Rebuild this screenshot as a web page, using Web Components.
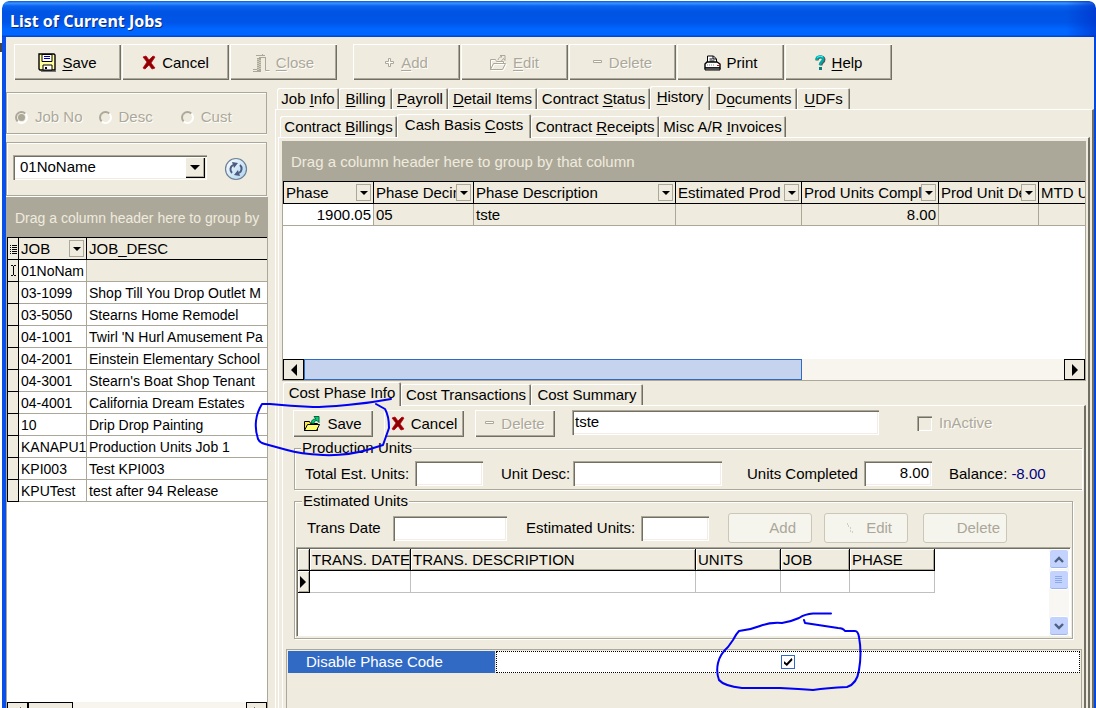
<!DOCTYPE html>
<html lang="en">
<head>
<meta charset="utf-8">
<title>List of Current Jobs</title>
<style>
html, body { height: 100%; margin: 0; overflow: hidden; background: #fff; }
body {
  --face: #efebde; --shade: #aca899; --dark: #716f64; --accent: #316ac5;
  font: 15px/18px "Liberation Sans", Arial, sans-serif; color: #000; position: relative;
}
</style>
</head>
<body>
<jobs-app></jobs-app>
<script>
const base = `
  *, *::before, *::after { box-sizing: border-box; }
  button, input, select { font: inherit; color: inherit; margin: 0; border-radius: 0; }
  u { text-underline-offset: 2px; }
`;

function define(name, html, setup) {
  const template = document.createElement('template');
  template.innerHTML = html;
  customElements.define(name, class extends HTMLElement {
    constructor() {
      super();
      this.attachShadow({ mode: 'open' }).append(template.content.cloneNode(true));
    }
    connectedCallback() { if (setup) setup(this, this.shadowRoot); }
  });
}

/* ---------- icons ---------- */
const icons = {
  floppy: [18, 19, `<path d="M1 1h15l1 1v15H2l-1-1z" fill="#ffff9c" stroke="#000" stroke-width="1.4"/><path d="M4 1.5h10v7H4z" fill="#fff" stroke="#000"/><path d="M6 3.5h6M6 5.5h6" stroke="#00a"/><path d="M5 12h9v5H5z" fill="#fff" stroke="#000"/><path d="M7 14h2v2H7z" fill="#000"/><path d="M3 18.5h15" stroke="#777"/>`],
  cross: [14, 15, `<path d="M1 2 4 1l3 4 4-4 2 1-4 6 4 5-3 1-3-4-4 4-2-1 4-6z" fill="#8b0000" stroke="#c00010" stroke-width=".8"/>`],
  door: [17, 18, `<g fill="none" stroke="#aca899"><path d="M3 1.500h9M9.500 0v2M6 3.500h6M12.500 3v13.500h4M0 15.500h5M0 17.500h8"/><path d="M6 4v13" stroke-width="4"/><path d="M5 5v11M7 6v10" stroke="#efebde" stroke-dasharray="1 1"/></g><path d="M17 17.500h-4" stroke="#fff"/>`],
  plus: [10, 10, `<path d="M3.500 .5h2v3h3v2h-3v3h-2v-3h-3v-2h3z" fill="#fff" stroke="#aca899"/>`],
  minus: [10, 5, `<path d="M.5 .5h8v2h-8z" fill="#fff" stroke="#aca899"/>`],
  folderoff: [17, 16, `<g fill="none" stroke="#fff" transform="translate(1 1)"><path d="M.5 14.500v-10h5l1 2h7v2M.5 14.500l3-6h12l-3 6z"/></g><g fill="none" stroke="#aca899"><path d="M.5 14.500v-10h5l1 2h7v2M.5 14.500l3-6h12l-3 6zM8 5c1-3 2-3 4-3l-2-1.500h5v5l-1.500-2-2.500 3"/></g>`],
  folder: [17, 16, `<path d="M.5 14.500v-9h5l1 2h7v7z" fill="#ffe94a" stroke="#000"/><path d="M.5 14.500l3-6h12l-3 6z" fill="#ffff70" stroke="#000"/><path d="M7 7c1-4 3-4 5-4l-2-2.500h5v6l-2-2c-2 0-3 1-3 3z" fill="#00d070" stroke="#064"/>`],
  printer: [17, 16, `<path d="M3.500 7V1h6l3 3v4" fill="#fff" stroke="#000"/><path d="M9 1v3h3M5.500 4h3M5.500 6h5" fill="none" stroke="#000"/><path d="M1 9l2-2h10l3 2v4H1z" fill="#fff" stroke="#000" stroke-width="1.4"/><path d="M1 13h15v2H1z" fill="#999" stroke="#000"/><path d="M13 10h2v1h-2z" fill="#f00"/><path d="M3 10h8" stroke="#888" stroke-dasharray="1 1"/>`],
  help: [11, 16, `<path d="M2 5.500C2 1 9 1 9 4.500 9 7.500 6 7 6 10.500" fill="none" stroke="#555" stroke-width="3"/><path d="M1.500 5C1.500 .5 8 .5 8 4 8 7 5 6.500 5 10" fill="none" stroke="#00a8a8" stroke-width="2.600"/><path d="M4 12h3v3H4z" fill="#008080"/><path d="M2 2.500Q5 0 8 2" fill="none" stroke="#3ff"/>`],
  dots: [8, 12, `<path d="M1 2h1M2 4h1M4 6h1M4 9h1M6 10h1" stroke="#aca899"/>`],
};
customElements.define('app-icon', class extends HTMLElement {
  constructor() { super(); this.attachShadow({ mode: 'open' }); }
  connectedCallback() {
    const [w, h, art] = icons[this.getAttribute('name')];
    this.shadowRoot.innerHTML = `<style>:host{display:block;flex:none}svg{display:block}</style>
      <svg width="${w}" height="${h}" viewBox="0 0 ${w} ${h}" aria-hidden="true">${art}</svg>`;
  }
});

/* ---------- push button ---------- */
define('raised-button', `
<style>${base}
:host { display: block; width: 107px; height: 36px; flex: none; }
:host([small]) { width: 80px; height: 27px; }
button { width: 100%; height: 100%; padding: 1px 0 0; display: flex; align-items: center; justify-content: center; gap: 6px;
  background: var(--face); border: 0; box-shadow: inset 1px 1px #fff, inset -1px -1px var(--dark), inset -2px -2px var(--shade); white-space: nowrap; }
:host([small]) button { padding: 0; }
button:disabled { color: var(--shade); text-shadow: 1px 1px #fff; }
</style>
<button><slot name="icon"></slot><span><slot></slot></span></button>`,
(host, root) => { root.querySelector('button').disabled = host.hasAttribute('disabled'); });

define('flat-button', `
<style>${base}
:host { display: block; width: 84px; height: 30px; flex: none; }
button { width: 100%; height: 100%; padding: 0 15px; display: flex; align-items: center; justify-content: flex-end; gap: 12px;
  background: #f6f5ed; border: 1px solid #cac7ba; border-radius: 3px; }
:host([tight]) button { padding: 0 6px; }
button:disabled { color: #aaa79a; }
</style>
<button disabled><slot name="icon"></slot><span><slot></slot></span></button>`);

/* ---------- tabs ---------- */
define('tab-strip', `
<style>
:host { display: flex; align-items: flex-end; height: 24px; padding-left: 2px; }
:host([flush]) { padding-left: 1px; }
</style><slot></slot>`, host => host.setAttribute('role', 'tablist'));

define('tab-item', `
<style>${base}
:host { display: block; height: 21px; flex: none; }
:host([selected]) { height: 24px; margin-bottom: -1px; z-index: 1; position: relative; }
button { height: 100%; width: 100%; padding: 0 4px; background: var(--face); border: 0; border-radius: 2px 2px 0 0; white-space: nowrap;
  display: flex; justify-content: center; align-items: center;
  box-shadow: inset 1px 1px #fff, inset -1px 0 var(--dark), inset -2px 0 var(--shade); }
:host([selected]) button { padding-bottom: 3px; }
</style><button role="tab"><slot></slot></button>`,
(host, root) => {
  host.style.width = host.getAttribute('size') + 'px';
  root.querySelector('button').setAttribute('aria-selected', host.hasAttribute('selected'));
});

define('tab-pane', `
<style>
:host { display: flex; flex-direction: column; flex: 1; min-height: 0; box-sizing: border-box; background: var(--face);
  border: solid; border-width: 1px 2px 0 1px; border-color: #fff var(--dark) transparent #fff; padding: 3px 2px 0 2px; }
:host([inner]) { padding: 3px 2px 0 3px; }
:host([form]) { padding: 4px 2px 0 3px; }
</style><slot></slot>`);

/* ---------- grids ---------- */
const gridCss = `${base}
:host { display: flex; flex-direction: column; overflow: hidden; background: #fff; }
.group { flex: none; height: 40px; padding: 2px 0 0 9px; background: var(--shade); color: var(--face); display: flex; align-items: center; white-space: nowrap; overflow: hidden; }
table { border-collapse: separate; border-spacing: 0; table-layout: fixed; width: 100%; }
th, td { padding: 0 0 0 2px; text-align: left; font-weight: normal; white-space: nowrap; overflow: hidden; }
th { height: 23px; background: var(--face); border: solid #000; border-width: 1px 1px 1px 0; }
td { height: 22px; border: solid var(--shade); border-width: 0 1px 1px 0; }
.cap { display: flex; align-items: center; justify-content: space-between; overflow: hidden; }
.cap span { overflow: hidden; min-width: 0; }
.cap button { flex: none; width: 15px; height: 17px; margin-right: 2px; padding: 0; background: var(--face); border: 1px solid var(--shade); display: grid; place-items: center; }
.cap button::before { content: ""; border: 4px solid transparent; border-top-color: #000; border-bottom: 0; }
td.num { text-align: right; padding-right: 2px; }
.soft { background: var(--face); }
.fill { flex: 1; }
`;
const cap = (text, filter = true) => `<div class="cap"><span>${text}</span>${filter ? `<button aria-label="Filter ${text}"></button>` : ''}</div>`;

define('flat-scrollbar', `
<style>${base}
:host { display: flex; flex: none; height: 21px; background: #f7f5ee; }
button { width: 21px; padding: 0; flex: none; background: var(--face); border: 1px solid #000; display: grid; place-items: center; }
svg { display: block; }
.thumb { width: var(--thumb, 45px); border: 1px solid var(--thumb-edge, #000); background: var(--thumb-fill, var(--face)); }
.track { flex: 1; }
</style>
<button aria-label="Scroll left"><svg width="6" height="12"><path d="M6 0v12L0 6z"/></svg></button>
<div class="thumb"></div><div class="track"></div>
<button aria-label="Scroll right"><svg width="6" height="12"><path d="M0 0v12l6-6z"/></svg></button>`);

const jobs = [
  ['03-1099', 'Shop Till You Drop Outlet M'], ['03-5050', 'Stearns Home Remodel'],
  ['04-1001', "Twirl 'N Hurl Amusement Pa"], ['04-2001', 'Einstein Elementary School'],
  ['04-3001', "Stearn's Boat Shop Tenant"], ['04-4001', 'California Dream Estates'],
  ['10', 'Drip Drop Painting'], ['KANAPU1', 'Production Units Job 1'],
  ['KPI003', 'Test KPI003'], ['KPUTest', 'test after 94 Release'],
];
define('jobs-grid', `
<style>${gridCss}
:host { flex: 1; border-right: 1px solid var(--shade); }
.body { flex: 1; display: flex; flex-direction: column; border-left: 1px solid var(--shade); }
.group, td { font-size: 14px; }
.mark { padding: 0; background: var(--face); border: solid #000; border-width: 0 1px 1px 1px; text-align: center; }
th.mark { border-top-width: 1px; }
.mark svg { display: block; margin: auto; }
td:last-child, th:last-child { border-right: 0; }
</style>
<div class="group">Drag a column header here to group by</div>
<div class="body">
<table><colgroup><col style="width:12px"><col style="width:68px"><col></colgroup>
<thead><tr><th class="mark"><svg width="8" height="10" aria-hidden="true"><path d="M1 1.500h1M3 1.500h5M1 3.500h1M3 3.500h5M1 5.500h1M3 5.500h5M1 7.500h1M3 7.500h5M1 9.500h1M3 9.500h5" stroke="#000"/></svg></th><th>${cap('JOB')}</th><th>JOB_DESC</th></tr></thead>
<tbody><tr><td class="mark"><svg width="7" height="11" aria-hidden="true"><path d="M1 .5h2M4 .5h2M3.500 1v9M1 10.500h2M4 10.500h2" stroke="#000"/></svg></td><td>01NoNam</td><td class="soft"></td></tr>
${jobs.map(([id, name]) => `<tr><td class="mark"></td><td>${id}</td><td>${name}</td></tr>`).join('')}</tbody></table>
<div class="fill"></div>
<flat-scrollbar></flat-scrollbar>
</div>`);

define('phase-grid', `
<style>${gridCss}
:host { height: 240px; flex: none; border-bottom: 1px solid var(--shade); }
.body { flex: 1; display: flex; flex-direction: column; border: solid var(--shade); border-width: 0 1px; }
th:first-child { border-left-width: 1px; }
th:last-child, td:last-child { border-right: 0; }
flat-scrollbar { --thumb: 498px; --thumb-edge: var(--accent); --thumb-fill: #c6d3ef; }
</style>
<div class="group">Drag a column header here to group by that column</div>
<div class="body">
<table><colgroup><col style="width:91px"><col style="width:100px"><col style="width:202px"><col style="width:126px"><col style="width:137px"><col style="width:100px"><col></colgroup>
<thead><tr><th>${cap('Phase')}</th><th>${cap('Phase Decim')}</th><th>${cap('Phase Description')}</th><th>${cap('Estimated Prod')}</th><th>${cap('Prod Units Compl')}</th><th>${cap('Prod Unit De')}</th><th>MTD U</th></tr></thead>
<tbody><tr><td class="num">1900.05</td><td class="soft">05</td><td class="soft">tste</td><td class="soft"></td><td class="soft num">8.00</td><td class="soft"></td><td class="soft"></td></tr></tbody></table>
<div class="fill"></div>
<flat-scrollbar></flat-scrollbar>
</div>`);

define('trans-grid', `
<style>${gridCss}
:host { flex-direction: row; justify-content: space-between; height: 90px; border: 1px solid var(--shade); border-right-color: #fff; border-bottom-color: #f1efe2; box-shadow: inset 1px 1px var(--dark); padding: 1px 0 0 1px; }
table { width: 637px; align-self: flex-start; }
th { height: 22px; border-top: 0; box-shadow: inset 1px 1px #fff, inset -1px -1px var(--shade); }
td { border-color: #c0c0c0; }
td:first-child { background: var(--face); border-color: #000; box-shadow: inset 1px 1px #fff, inset -1px -1px var(--shade); }
svg { display: block; }
.bar { width: 20px; margin-right: 1px; display: flex; flex-direction: column; gap: 1px; background: #f8f7f3; }
.bar button { height: 20px; padding: 0; flex: none; display: grid; place-items: center; background: #c3d3fd; border: 1px solid #fff; border-radius: 3px; box-shadow: inset 0 -1px #9cb5ec; }
.bar div { flex: 1; }
</style>
<table><colgroup><col style="width:12px"><col style="width:101px"><col style="width:285px"><col style="width:85px"><col style="width:69px"><col style="width:85px"></colgroup>
<thead><tr><th></th><th>TRANS. DATE</th><th>TRANS. DESCRIPTION</th><th>UNITS</th><th>JOB</th><th>PHASE</th></tr></thead>
<tbody><tr><td><svg width="7" height="12" aria-hidden="true"><path d="M0 0v12l6-6z"/></svg></td><td></td><td></td><td></td><td></td><td></td></tr></tbody></table>
<div class="bar">
<button aria-label="Scroll up"><svg width="10" height="7"><path d="M1 6l4-4 4 4" fill="none" stroke="#4d6185" stroke-width="2.400"/></svg></button>
<button aria-label="Scroll thumb"><svg width="8" height="8"><path d="M0 .5h7M0 2.500h7M0 4.500h7M0 6.500h7" stroke="#8ca9ea"/></svg></button>
<div></div>
<button aria-label="Scroll down"><svg width="10" height="7"><path d="M1 1l4 4 4-4" fill="none" stroke="#4d6185" stroke-width="2.400"/></svg></button>
</div>`);

/* ---------- left panel ---------- */
define('job-picker', `
<style>${base}
:host { display: flex; flex-direction: column; padding-right: 1px; }
.box { border: 1px solid var(--shade); box-shadow: inset 1px 1px #fff, 0 1px #fff; display: flex; align-items: center; }
.modes { height: 42px; padding: 8px 8px 0; margin-bottom: 8px; color: var(--shade); text-shadow: 1px 1px #fff; gap: 16px; }
.modes label { display: flex; align-items: center; gap: 7px; }
.modes label:last-child { margin-left: 12px; }
input { appearance: none; width: 13px; height: 13px; border-radius: 50%; border: 2px solid; border-color: var(--shade) #fff #fff var(--shade); display: grid; place-items: center; }
input:checked::before { content: ""; width: 7px; height: 7px; border-radius: 50%; background: var(--shade); }
.combo { height: 54px; padding: 0 18px 4px 6px; justify-content: space-between; margin-bottom: 1px; }
.select { position: relative; width: 194px; height: 25px; }
select { appearance: none; width: 100%; height: 100%; background: #fff; padding: 0 24px 0 7px; border: 0; box-shadow: inset 1px 1px var(--shade), inset 2px 2px var(--dark), inset -1px -1px #fff, inset -2px -2px var(--face); }
.arrow { position: absolute; right: 2px; top: 2px; width: 20px; height: 21px; pointer-events: none; background: var(--face); display: grid; place-items: center; box-shadow: inset 1px 1px #fff, inset -1px -1px #000, inset -2px -2px var(--shade); }
.arrow::before { content: ""; border: 5px solid transparent; border-top-color: #000; border-bottom: 0; }
.refresh { width: 24px; height: 28px; padding: 4px 0 0; background: none; border: 0; }
svg { display: block; }
</style>
<div class="box modes">
<label><input type="radio" name="mode" checked disabled>Job No</label>
<label><input type="radio" name="mode" disabled>Desc</label>
<label><input type="radio" name="mode" disabled>Cust</label>
</div>
<div class="box combo">
<div class="select"><select aria-label="Job"><option>01NoName</option></select><span class="arrow"></span></div>
<button class="refresh" aria-label="Refresh"><svg width="24" height="24"><defs><linearGradient id="g" x1="0" y1="0" x2="1" y2="1"><stop offset="0" stop-color="#fff"/><stop offset="1" stop-color="#a9d3f0"/></linearGradient></defs><circle cx="12" cy="12" r="10.500" fill="url(#g)" stroke="#6d8198" stroke-width="1.200"/><path d="M8 16a5 5 0 0 1 1-8M16 8a5 5 0 0 1-1 8" fill="none" stroke="#4c5c80" stroke-width="2"/><path d="M8 5l6 1-4 5zM16 19l-6-1 4-5z" fill="#4c5c80"/></svg></button>
</div>`);

/* ---------- phase form ---------- */
define('phase-form', `
<style>${base}
:host { display: block; }
.row { display: flex; align-items: center; }
.actions { gap: 11px; padding-left: 7px; height: 27px; align-items: flex-start; }
.text { width: 68px; height: 25px; padding: 0 3px 3px; background: #fff; border: 0; flex: none;
  box-shadow: inset 1px 1px var(--shade), inset 2px 2px var(--dark), inset -1px -1px #fff, inset -2px -2px #f5ece8; }
.title { width: 307px; margin-left: 6px; }
.off { display: flex; align-items: center; gap: 7px; margin: 4px 0 0 27px; color: var(--shade); text-shadow: 1px 1px #fff; }
.off input { appearance: none; width: 15px; height: 15px; background: var(--face); box-shadow: inset 1px 1px var(--shade), inset 2px 2px var(--dark), inset -1px -1px #fff; }
fieldset { margin: 2px 0 0 8px; min-width: 0; border: 1px solid var(--shade); box-shadow: 1px 1px #fff, inset 1px 1px #fff; }
legend { height: 18px; padding: 0 1px; margin-left: 6px; background: var(--face); position: relative; }
.units { border-right: 0; padding: 4px 0 3px; }
.units .row { padding-left: 10px; }
.est { margin-right: 9px; padding: 3px 1px 1px; }
.est .row { padding-left: 11px; height: 30px; margin-bottom: 4px; }
.lab { width: 110px; flex: none; } .desc { width: 72px; margin-left: 18px; flex: none; } .wide { width: 149px; }
.done { width: 117px; margin-left: 25px; flex: none; } .bal { margin-left: 17px; } .neg { color: #000080; margin-left: 4px; }
.date { width: 86px; flex: none; } .datebox { width: 114px; } .eu { width: 115px; margin-left: 19px; flex: none; }
flat-button { margin-left: 12px; } flat-button:first-of-type { margin-left: 19px; } flat-button:last-of-type { margin-left: 15px; }
.num { text-align: right; }
.inspector { margin: 10px 0 0; border: 1px solid var(--shade); border-bottom: 0; padding: 1px; display: flex; height: 72px; align-items: flex-start; }
.key { width: 207px; height: 22px; padding: 2px 18px; background: var(--accent); color: #fff; flex: none; margin-right: 1px; }
.value { flex: 1; height: 22px; background: #fff; border: 1px dotted #000; display: flex; align-items: center; justify-content: center; }
.value input { appearance: none; width: 14px; height: 14px; border: 1px solid var(--accent); background: #fff; display: grid; place-items: center; }
.value input::before { content: ""; width: 9px; height: 8px; background: #000; clip-path: polygon(0 35%, 35% 65%, 90% 0, 100% 25%, 38% 100%, 0 65%); }
</style>
<div class="row actions">
<raised-button small><app-icon slot="icon" name="folder"></app-icon>Save</raised-button>
<raised-button small><app-icon slot="icon" name="cross"></app-icon>Cancel</raised-button>
<raised-button small disabled><app-icon slot="icon" name="minus"></app-icon>Delete</raised-button>
<input class="text title" aria-label="Phase description" value="tste">
<label class="off"><input type="checkbox" disabled>InActive</label>
</div>
<fieldset class="units"><legend>Production Units</legend>
<div class="row">
<label class="lab" for="total">Total Est. Units:</label><input class="text" id="total">
<label class="desc" for="desc">Unit Desc:</label><input class="text wide" id="desc">
<label class="done" for="done">Units Completed</label><input class="text num" id="done" value="8.00">
<span class="bal">Balance:</span><span class="neg">-8.00</span>
</div></fieldset>
<fieldset class="est"><legend>Estimated Units</legend>
<div class="row">
<label class="date" for="date">Trans Date</label><input class="text datebox" id="date">
<label class="eu" for="eu">Estimated Units:</label><input class="text" id="eu">
<flat-button>Add</flat-button>
<flat-button><app-icon slot="icon" name="dots"></app-icon>Edit</flat-button>
<flat-button tight>Delete</flat-button>
</div>
<trans-grid></trans-grid>
</fieldset>
<div class="inspector"><label class="key" for="disable">Disable Phase Code</label><div class="value"><input type="checkbox" id="disable" checked></div></div>`);

/* ---------- pen marks over the page ---------- */
define('pen-marks', `
<style>:host { position: absolute; left: 0; top: 0; z-index: 5; pointer-events: none; } svg { display: block; }</style>
<svg width="900" height="700" fill="none" stroke="#0000f4" stroke-width="2" stroke-linejoin="round" stroke-linecap="round" aria-hidden="true">
<path d="M391 399Q370 403 347 405T313 407Q290 406 270 404H262Q257 412 256 421T258 439Q260 443 265 444L287 450Q300 454 323 455T367 450L383 445 389 428Q389 416 385 409L376 404"/>
<path d="M831 613.500H813Q805 614 799 618 790 622 782 623 770 622 760 626 750 630 739 631 736 634 733 640L728 647Q720 654 718 663T719 680Q724 686 742 688H780Q800 689 813 690 827 688 847 687 857 684 859 670 862 653 859 637 858 631 855 631L845 631Q843 628 838 628 825 626 805 623L804 620"/>
</svg>`);

/* ---------- window ---------- */
define('app-window', `
<style>
:host { display: flex; flex-direction: column; box-sizing: border-box; overflow: hidden; background: var(--face); border-radius: 7px 7px 0 0; }
header { flex: none; height: 36px; padding: 4px 8px 0; box-sizing: border-box; display: flex; align-items: center; border-radius: 7px 7px 0 0;
  background: linear-gradient(90deg, transparent calc(100% - 30px), #0030c8aa), linear-gradient(#0a58d8, #3a93ff 6%, #0a62f0 14%, #0054e3 30%, #0055e8 60%, #0066ff 78%, #0066ff 93%, #0040c8); }
h1 { margin: 0; font: bold 16px/20px "Noto Sans", sans-serif; color: #fff; text-shadow: 1px 1px #0a2a80; }
.body { flex: 1; min-height: 0; display: flex; flex-direction: column; border: solid; border-width: 0 2px 0 4px; border-color: #0048e0 #0048e0 transparent #0a50e8; }
</style>
<header><h1><slot name="title"></slot></h1></header><div class="body"><slot></slot></div>`);

define('jobs-app', `
<style>${base}
:host { display: block; padding: 1px 0 0 2px; background: linear-gradient(#454545, #454545) 0 43px / 2px 9px no-repeat #fff; }
app-window { height: calc(100vh + 14px); }
nav { flex: none; display: flex; gap: 1px; padding: 7px 8px 5px; }
.gap { margin-left: 15px; }
main { flex: 1; min-height: 0; display: flex; gap: 7px; }
aside { width: 262px; flex: none; display: flex; flex-direction: column; padding-top: 7px; }
section { flex: 1; min-width: 0; display: flex; flex-direction: column; }
</style>
<app-window><span slot="title">List of Current Jobs</span>
<nav aria-label="Job actions">
<raised-button><app-icon slot="icon" name="floppy"></app-icon><u>S</u>ave</raised-button>
<raised-button><app-icon slot="icon" name="cross"></app-icon>Cancel</raised-button>
<raised-button disabled><app-icon slot="icon" name="door"></app-icon><u>C</u>lose</raised-button>
<raised-button class="gap" disabled><app-icon slot="icon" name="plus"></app-icon><u>A</u>dd</raised-button>
<raised-button disabled><app-icon slot="icon" name="folderoff"></app-icon><u>E</u>dit</raised-button>
<raised-button disabled><app-icon slot="icon" name="minus"></app-icon>Delete</raised-button>
<raised-button><app-icon slot="icon" name="printer"></app-icon>Print</raised-button>
<raised-button><app-icon slot="icon" name="help"></app-icon><u>H</u>elp</raised-button>
</nav>
<main>
<aside><job-picker></job-picker><jobs-grid></jobs-grid></aside>
<section>
<tab-strip><tab-item size="62">Job&nbsp;<u>I</u>nfo</tab-item><tab-item size="53"><u>B</u>illing</tab-item><tab-item size="56"><u>P</u>ayroll</tab-item><tab-item size="89"><u>D</u>etail Items</tab-item><tab-item size="113">Contract&nbsp;<u>S</u>tatus</tab-item><tab-item size="60" selected><u>H</u>istory</tab-item><tab-item size="87">D<u>o</u>cuments</tab-item><tab-item size="53"><u>U</u>DFs</tab-item></tab-strip>
<tab-pane>
<tab-strip><tab-item size="117">Contract&nbsp;<u>B</u>illings</tab-item><tab-item size="134" selected>Cash Basis&nbsp;<u>C</u>osts</tab-item><tab-item size="128">Contract&nbsp;<u>R</u>eceipts</tab-item><tab-item size="127">Misc A/R&nbsp;<u>I</u>nvoices</tab-item></tab-strip>
<tab-pane inner>
<phase-grid></phase-grid>
<tab-strip flush><tab-item size="118" selected>Cost Phase Info</tab-item><tab-item size="130">Cost Transactions</tab-item><tab-item size="112">Cost Summary</tab-item></tab-strip>
<tab-pane form><phase-form></phase-form></tab-pane>
</tab-pane>
</tab-pane>
</section>
</main>
</app-window>
<pen-marks></pen-marks>`);
</script>
</body>
</html>
